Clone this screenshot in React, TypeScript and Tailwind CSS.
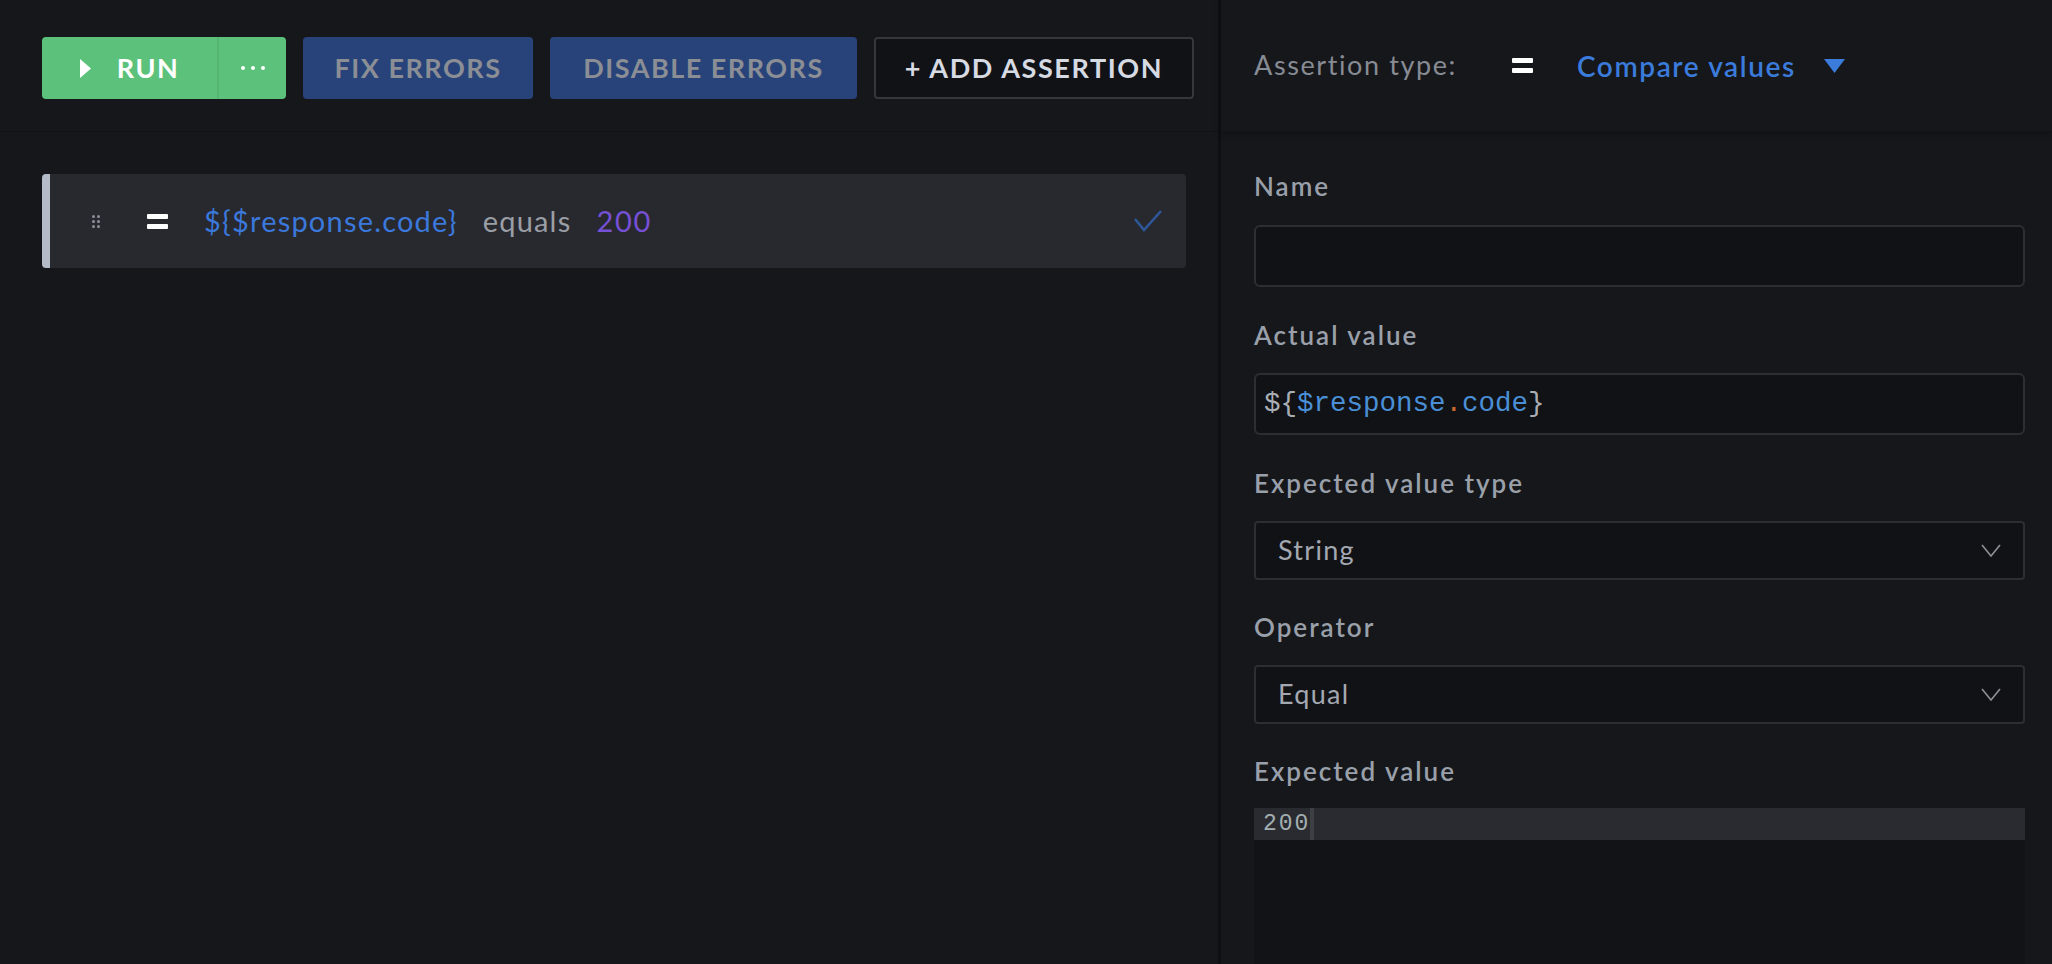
import { ReactNode } from "react";

const font = "font-['Lato','Open_Sans',sans-serif]";
const mono = "font-['Liberation_Mono','DejaVu_Sans_Mono',monospace]";

function EqualsIcon() {
  return (
    <div className="flex flex-col gap-[5px] w-[21px]">
      <div className="h-[5px] bg-white rounded-[1px]" />
      <div className="h-[5px] bg-white rounded-[1px]" />
    </div>
  );
}

function DragHandle() {
  return (
    <div className="grid grid-cols-2 gap-x-[2px] gap-y-[2px] w-[8px]">
      {[0, 1, 2, 3, 4, 5].map((i) => (
        <div key={i} className="w-[3px] h-[3px] rounded-full bg-[#8a9099]" />
      ))}
    </div>
  );
}

function Chevron() {
  return (
    <svg width="20" height="13" viewBox="0 0 20 13" fill="none">
      <polyline points="1,1 10,12 19,1" stroke="#8c9199" strokeWidth="1.6" />
    </svg>
  );
}

function Label({ text, mb }: { text: string; mb: string }) {
  return (
    <p className={`h-[32px] leading-[32px] text-[26px] font-semibold tracking-[2px] text-[#9aa0aa] ${mb}`}>{text}</p>
  );
}

function Select({ value }: { value: string }) {
  return (
    <div className="h-[59px] flex items-center justify-between bg-[#111216] border-2 border-[#2c2e33] rounded-[4px] pl-[22px] pr-[22px]">
      <span className="text-[27px] tracking-[1.3px] text-[#a3a8b1]">{value}</span>
      <Chevron />
    </div>
  );
}

function Field({ label, top, children }: { label: string; top: string; children: ReactNode }) {
  return (
    <div className={`flex flex-col ${top}`}>
      <Label text={label} mb="mb-[22px]" />
      {children}
    </div>
  );
}

export default function App() {
  return (
    <div className={`w-[2052px] h-[964px] bg-[#16171b] flex overflow-hidden ${font}`}>
      {/* left panel */}
      <div className="w-[1218px] flex flex-col">
        <div className="h-[132px] pt-[37px] pl-[42px] flex items-start gap-[17px] border-b border-[#121317]">
          <div className="h-[62px] w-[244px] flex bg-[#5cc27b] rounded-[4px]">
            <div className="w-[177px] flex items-center justify-center gap-[25px] border-r-2 border-[#55b472]">
              <svg width="12" height="19" viewBox="0 0 12 19">
                <polygon points="0,0 11,9.5 0,19" fill="#fff" />
              </svg>
              <span className="text-white font-bold text-[27px] tracking-[1.5px]">RUN</span>
            </div>
            <div className="flex-1 flex items-center justify-center gap-[6px]">
              <div className="w-[4px] h-[4px] bg-white rounded-full" />
              <div className="w-[4px] h-[4px] bg-white rounded-full" />
              <div className="w-[4px] h-[4px] bg-white rounded-full" />
            </div>
          </div>
          <button className="h-[62px] w-[230px] bg-[#27437a] rounded-[4px] text-[#8b8e94] font-bold text-[27px] tracking-[1.5px]">
            FIX ERRORS
          </button>
          <button className="h-[62px] w-[307px] bg-[#27437a] rounded-[4px] text-[#8b8e94] font-bold text-[27px] tracking-[1.5px]">
            DISABLE ERRORS
          </button>
          <button className="h-[62px] w-[320px] bg-[#111215] border-2 border-[#35373c] rounded-[4px] text-[#d6dae3] font-bold text-[27px] tracking-[1.6px]">
            + ADD ASSERTION
          </button>
        </div>

        <div className="pt-[42px] pl-[42px] pr-[32px]">
          <div className="h-[94px] flex items-center bg-[#28292e] rounded-[4px] border-l-[8px] border-[#b3bcc7]">
            <div className="ml-[42px]">
              <DragHandle />
            </div>
            <div className="ml-[47px]">
              <EqualsIcon />
            </div>
            <span className="ml-[36px] text-[29px] tracking-[1.2px] text-[#3b78dc]">{"${$response.code}"}</span>
            <span className="ml-[25px] text-[29px] tracking-[1.2px] text-[#9a9ea6]">equals</span>
            <span className="ml-[25px] text-[29px] tracking-[1.7px] text-[#7650d6]">200</span>
            <svg className="ml-auto mr-[24px]" width="28" height="22" viewBox="0 0 28 22" fill="none">
              <polyline points="1,9 10,20 27,1" stroke="#2e5799" strokeWidth="2.6" />
            </svg>
          </div>
        </div>
      </div>

      <div className="w-[3px] bg-[#0e0f12]" />

      {/* right panel */}
      <div className="flex-1 flex flex-col">
        <div className="h-[132px] flex items-center pl-[33px] border-b border-[#121317] shadow-[0_2px_6px_rgba(0,0,0,0.25)]">
          <span className="text-[27px] tracking-[1.6px] text-[#868b94]">Assertion type:</span>
          <div className="ml-[55px]">
            <EqualsIcon />
          </div>
          <span className="ml-[44px] text-[28px] font-semibold tracking-[1.6px] text-[#3a7bdb]">Compare values</span>
          <svg className="ml-[28px]" width="21" height="14" viewBox="0 0 21 14">
            <polygon points="0,0 21,0 10.5,14" fill="#3a7bdb" />
          </svg>
        </div>

        <div className="flex-1 flex flex-col pt-[38px] pl-[33px] pr-[27px]">
          <div className="flex flex-col">
            <Label text="Name" mb="mb-[23px]" />
            <div className="h-[62px] bg-[#111216] border-2 border-[#2c2e33] rounded-[6px]" />
          </div>
          <Field label="Actual value" top="mt-[32px]">
            <div className="h-[62px] flex items-center bg-[#111216] border-2 border-[#2c2e33] rounded-[6px] pl-[8px]">
              <span className={`${mono} text-[27.5px] text-[#a9aeb4]`}>
                {"${"}
                <span className="text-[#4a8fd6]">$response</span>
                <span className="text-[#c8692c]">.</span>
                <span className="text-[#4a8fd6]">code</span>
                {"}"}
              </span>
            </div>
          </Field>
          <Field label="Expected value type" top="mt-[32px]">
            <Select value="String" />
          </Field>
          <Field label="Operator" top="mt-[31px]">
            <Select value="Equal" />
          </Field>
          <div className="flex-1 flex flex-col mt-[31px]">
            <Label text="Expected value" mb="mb-[21px]" />
            <div className="flex-1 bg-[#121317]">
              <div className="h-[32px] flex items-stretch bg-[#2a2b30] pl-[9px]">
                <span className={`${mono} text-[23px] leading-[32px] tracking-[2px] text-[#a3aeb0]`}>200</span>
                <div className="w-[4px] bg-[#3c3f44]" />
              </div>
            </div>
          </div>
        </div>
      </div>
    </div>
  );
}
